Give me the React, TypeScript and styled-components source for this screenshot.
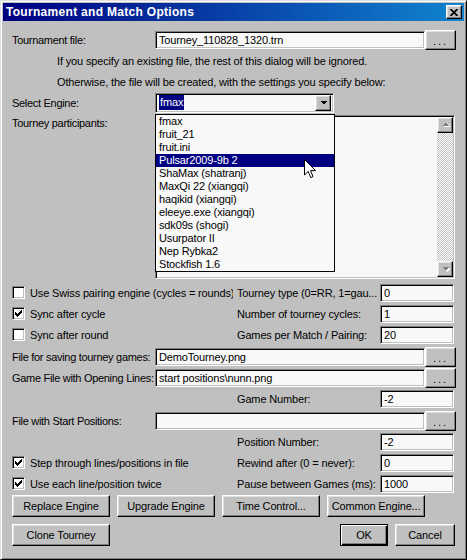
import { createGlobalStyle, styled } from 'styled-components'

const GlobalStyle = createGlobalStyle`
  html, body {
    margin: 0;
    padding: 0;
    background: #c0c0c0;
  }
`

const engines = [
  'fmax',
  'fruit_21',
  'fruit.ini',
  'Pulsar2009-9b 2',
  'ShaMax (shatranj)',
  'MaxQi 22 (xiangqi)',
  'haqikid (xiangqi)',
  'eleeye.exe (xiangqi)',
  'sdk09s (shogi)',
  'Usurpator II',
  'Nep Rybka2',
  'Stockfish 1.6',
]

const Triangle = ({ down = false, disabled = false }: { down?: boolean; disabled?: boolean }) => (
  <svg width="9" height="6" viewBox="0 0 9 6" shapeRendering="crispEdges">
    {disabled && <path d={down ? 'M2 2 H10 L6 6 Z' : 'M6 1 L10 5 H2 Z'} fill="#fff" />}
    <path
      d={down ? 'M1 1 H8 L4.5 4.5 Z' : 'M4.5 0.5 L8 4 H1 Z'}
      fill={disabled ? '#808080' : '#000'}
    />
  </svg>
)

const CheckMark = () => (
  <svg width="7" height="7" viewBox="0 0 7 7" shapeRendering="crispEdges">
    <path d="M0 2 L2 4 L7 -1 V2 L2 7 L0 5 Z" fill="#000" />
  </svg>
)

export default function App() {
  return (
    <>
      <GlobalStyle />
      <Window>
        <TitleBar>
          <Title>Tournament and Match Options</Title>
          <CloseButton>
            <svg width="8" height="7" viewBox="0 0 8 7">
              <path d="M0.5 0 L7.5 7 M7.5 0 L0.5 7" stroke="#000" strokeWidth="1.7" />
            </svg>
          </CloseButton>
        </TitleBar>

        <Body>
          <Row>
            <Label>Tournament file:</Label>
            <Edit>Tourney_110828_1320.trn</Edit>
            <Browse>...</Browse>
          </Row>
          <Note>If you specify an existing file, the rest of this dialog will be ignored.</Note>
          <Note>Otherwise, the file will be created, with the settings you specify below:</Note>

          <Row>
            <Label>Select Engine:</Label>
            <ComboWrap>
              <Combo>
                <ComboValue>
                  <Selected>fmax</Selected>
                </ComboValue>
                <DropButton>
                  <Triangle down />
                </DropButton>
              </Combo>
              <DropList>
                {engines.map((name, i) => (
                  <DropItem key={name} $active={i === 3}>
                    {name}
                  </DropItem>
                ))}
                <Cursor width="12" height="20" viewBox="0 0 12 20">
                  <path
                    d="M0.5 0.5 V16 L4.2 12.4 L6.8 18.6 L9 17.6 L6.5 11.6 H11.5 Z"
                    fill="#fff"
                    stroke="#000"
                    strokeWidth="1"
                  />
                </Cursor>
              </DropList>
            </ComboWrap>
          </Row>

          <ListRow>
            <Label $top>Tourney participants:</Label>
            <ListBox>
              <ScrollBar>
                <ScrollArrow>
                  <Triangle disabled />
                </ScrollArrow>
                <Track />
                <ScrollArrow>
                  <Triangle down disabled />
                </ScrollArrow>
              </ScrollBar>
            </ListBox>
          </ListRow>

          <Row $mt={2}>
            <CheckCell>
              <Checkbox />
              <CheckText>Use Swiss pairing engine (cycles = rounds)</CheckText>
            </CheckCell>
            <SideLabel>Tourney type (0=RR, 1=gau...</SideLabel>
            <Edit $w={74}>0</Edit>
          </Row>
          <Row>
            <CheckCell>
              <Checkbox>
                <CheckMark />
              </Checkbox>
              <CheckText>Sync after cycle</CheckText>
            </CheckCell>
            <SideLabel>Number of tourney cycles:</SideLabel>
            <Edit $w={74}>1</Edit>
          </Row>
          <Row>
            <CheckCell>
              <Checkbox />
              <CheckText>Sync after round</CheckText>
            </CheckCell>
            <SideLabel>Games per Match / Pairing:</SideLabel>
            <Edit $w={74}>20</Edit>
          </Row>

          <Row $mt={1}>
            <Label>File for saving tourney games:</Label>
            <Edit>DemoTourney.png</Edit>
            <Browse>...</Browse>
          </Row>
          <Row>
            <Label>Game File with Opening Lines:</Label>
            <Edit>start positions\nunn.png</Edit>
            <Browse>...</Browse>
          </Row>
          <Row>
            <Spacer />
            <SideLabel>Game Number:</SideLabel>
            <Edit $w={74}>-2</Edit>
          </Row>
          <Row $mt={1}>
            <Label>File with Start Positions:</Label>
            <Edit />
            <Browse>...</Browse>
          </Row>
          <Row>
            <Spacer />
            <SideLabel>Position Number:</SideLabel>
            <Edit $w={74}>-2</Edit>
          </Row>
          <Row>
            <CheckCell>
              <Checkbox>
                <CheckMark />
              </Checkbox>
              <CheckText>Step through lines/positions in file</CheckText>
            </CheckCell>
            <SideLabel>Rewind after (0 = never):</SideLabel>
            <Edit $w={74}>0</Edit>
          </Row>
          <Row>
            <CheckCell>
              <Checkbox>
                <CheckMark />
              </Checkbox>
              <CheckText>Use each line/position twice</CheckText>
            </CheckCell>
            <SideLabel>Pause between Games (ms):</SideLabel>
            <Edit $w={74}>1000</Edit>
          </Row>

          <ButtonRow $mt={1}>
            <Button>Replace Engine</Button>
            <Button>Upgrade Engine</Button>
            <Button>Time Control...</Button>
            <Button>Common Engine...</Button>
          </ButtonRow>
          <ButtonRow $mt={7}>
            <Button>Clone Tourney</Button>
            <Push />
            <Button $w={48} $default>
              OK
            </Button>
            <Button $w={60}>Cancel</Button>
          </ButtonRow>
        </Body>
      </Window>
    </>
  )
}

// Styled components
const Window = styled.div`
  width: 467px;
  height: 560px;
  box-sizing: border-box;
  padding: 2px;
  border: 1px solid;
  border-color: #dfdfdf #000 #000 #dfdfdf;
  box-shadow: inset 1px 1px #fff, inset -1px -1px #808080;
  background: #c0c0c0;
  display: flex;
  flex-direction: column;
  color: #000;
  font-family: 'Liberation Sans', Arial, sans-serif;
  font-size: 11px;
  letter-spacing: -0.15px;
`

const TitleBar = styled.div`
  height: 18px;
  flex-shrink: 0;
  display: flex;
  align-items: center;
  justify-content: space-between;
  padding: 0 2px 0 3px;
  background: linear-gradient(to right, #000080, #1084d0);
`

const Title = styled.span`
  color: #fff;
  font-weight: 700;
  font-size: 12px;
  letter-spacing: 0.3px;
`

const raised = `
  box-sizing: border-box;
  background: #c0c0c0;
  border: 1px solid;
  border-color: #fff #000 #000 #fff;
  box-shadow: inset -1px -1px #808080, inset 1px 1px #dfdfdf;
`

const sunken = `
  box-sizing: border-box;
  border: 1px solid;
  border-color: #808080 #fff #fff #808080;
  box-shadow: inset 1px 1px #000, inset -1px -1px #c0c0c0;
  background: #f8f8f8;
`

const CloseButton = styled.div`
  ${raised}
  width: 16px;
  height: 14px;
  display: flex;
  align-items: center;
  justify-content: center;
`

const Body = styled.div`
  flex: 1;
  display: flex;
  flex-direction: column;
  padding: 8px 8px 0 9px;
`

const Row = styled.div<{ $mt?: number }>`
  height: 21px;
  flex-shrink: 0;
  display: flex;
  align-items: center;
  margin-top: ${(p) => p.$mt ?? 0}px;
`

const Label = styled.div<{ $top?: boolean }>`
  width: 143px;
  flex-shrink: 0;
  white-space: nowrap;
  letter-spacing: -0.3px;
  align-self: ${(p) => (p.$top ? 'flex-start' : 'auto')};
  padding-top: ${(p) => (p.$top ? '3px' : '0')};
`

const Note = styled.div`
  height: 21px;
  display: flex;
  align-items: center;
  margin-left: 45px;
  white-space: nowrap;
`

const Edit = styled.div<{ $w?: number }>`
  ${sunken}
  ${(p) => (p.$w ? `width: ${p.$w}px; flex-shrink: 0;` : 'flex: 1;')}
  height: 18px;
  padding: 0 3px;
  display: flex;
  align-items: center;
  white-space: nowrap;
  overflow: hidden;
`

const Browse = styled.div`
  ${raised}
  width: 31px;
  height: 20px;
  flex-shrink: 0;
  display: flex;
  align-items: flex-end;
  justify-content: center;
  padding-bottom: 3px;
  letter-spacing: 2px;
  line-height: 10px;
`

const ComboWrap = styled.div`
  position: relative;
  width: 179px;
  height: 20px;
`

const Combo = styled.div`
  ${sunken}
  height: 20px;
  display: flex;
  align-items: center;
  padding: 2px;
`

const ComboValue = styled.div`
  flex: 1;
  display: flex;
  align-items: center;
  padding-left: 1px;
`

const Selected = styled.span`
  background: #000080;
  color: #fff;
  padding: 1px 1px;
  line-height: 13px;
`

const DropButton = styled.div`
  ${raised}
  width: 16px;
  height: 16px;
  display: flex;
  align-items: center;
  justify-content: center;
`

const DropList = styled.div`
  position: absolute;
  top: 21px;
  left: 0;
  width: 180px;
  box-sizing: border-box;
  border: 1px solid #000;
  background: #f8f8f8;
  z-index: 2;
`

const DropItem = styled.div<{ $active?: boolean }>`
  height: 13px;
  line-height: 13px;
  padding-left: 3px;
  white-space: nowrap;
  background: ${(p) => (p.$active ? '#000080' : 'transparent')};
  color: ${(p) => (p.$active ? '#fff' : '#000')};
`

const Cursor = styled.svg`
  position: absolute;
  left: 148px;
  top: 44px;
`

const ListRow = styled.div`
  height: 166px;
  flex-shrink: 0;
  display: flex;
  margin-top: 1px;
`

const ListBox = styled.div`
  ${sunken}
  flex: 1;
  height: 164px;
  margin: 1px 1px 0 0;
  padding: 1px;
  display: flex;
  justify-content: flex-end;
`

const ScrollBar = styled.div`
  width: 16px;
  display: flex;
  flex-direction: column;
`

const ScrollArrow = styled.div`
  ${raised}
  width: 16px;
  height: 16px;
  flex-shrink: 0;
  display: flex;
  align-items: center;
  justify-content: center;
`

const Track = styled.div`
  flex: 1;
  background-color: #fff;
  background-image: repeating-conic-gradient(#c0c0c0 0 25%, #fff 0 50%);
  background-size: 2px 2px;
`

const CheckCell = styled.div`
  width: 221px;
  margin-right: 4px;
  flex-shrink: 0;
  display: flex;
  align-items: center;
  overflow: hidden;
  white-space: nowrap;
`

const Checkbox = styled.div`
  ${sunken}
  width: 13px;
  height: 13px;
  flex-shrink: 0;
  background: #fff;
  display: flex;
  align-items: center;
  justify-content: center;
`

const CheckText = styled.span`
  margin-left: 5px;
`

const Spacer = styled.div`
  width: 225px;
  flex-shrink: 0;
`

const SideLabel = styled.div`
  width: 143px;
  flex-shrink: 0;
  white-space: nowrap;
  overflow: hidden;
`

const ButtonRow = styled.div<{ $mt?: number }>`
  height: 22px;
  flex-shrink: 0;
  display: flex;
  gap: 7px;
  margin-top: ${(p) => p.$mt ?? 0}px;
`

const Push = styled.div`
  flex: 1;
`

const Button = styled.div<{ $w?: number; $default?: boolean }>`
  ${raised}
  width: ${(p) => p.$w ?? 98}px;
  height: 22px;
  display: flex;
  align-items: center;
  justify-content: center;
  white-space: nowrap;
  ${(p) =>
    p.$default &&
    `
    border: 1px solid #000;
    box-shadow: inset 1px 1px #fff, inset -1px -1px #000, inset -2px -2px #808080;
  `}
  &:last-child {
    margin-right: 1px;
  }
`
